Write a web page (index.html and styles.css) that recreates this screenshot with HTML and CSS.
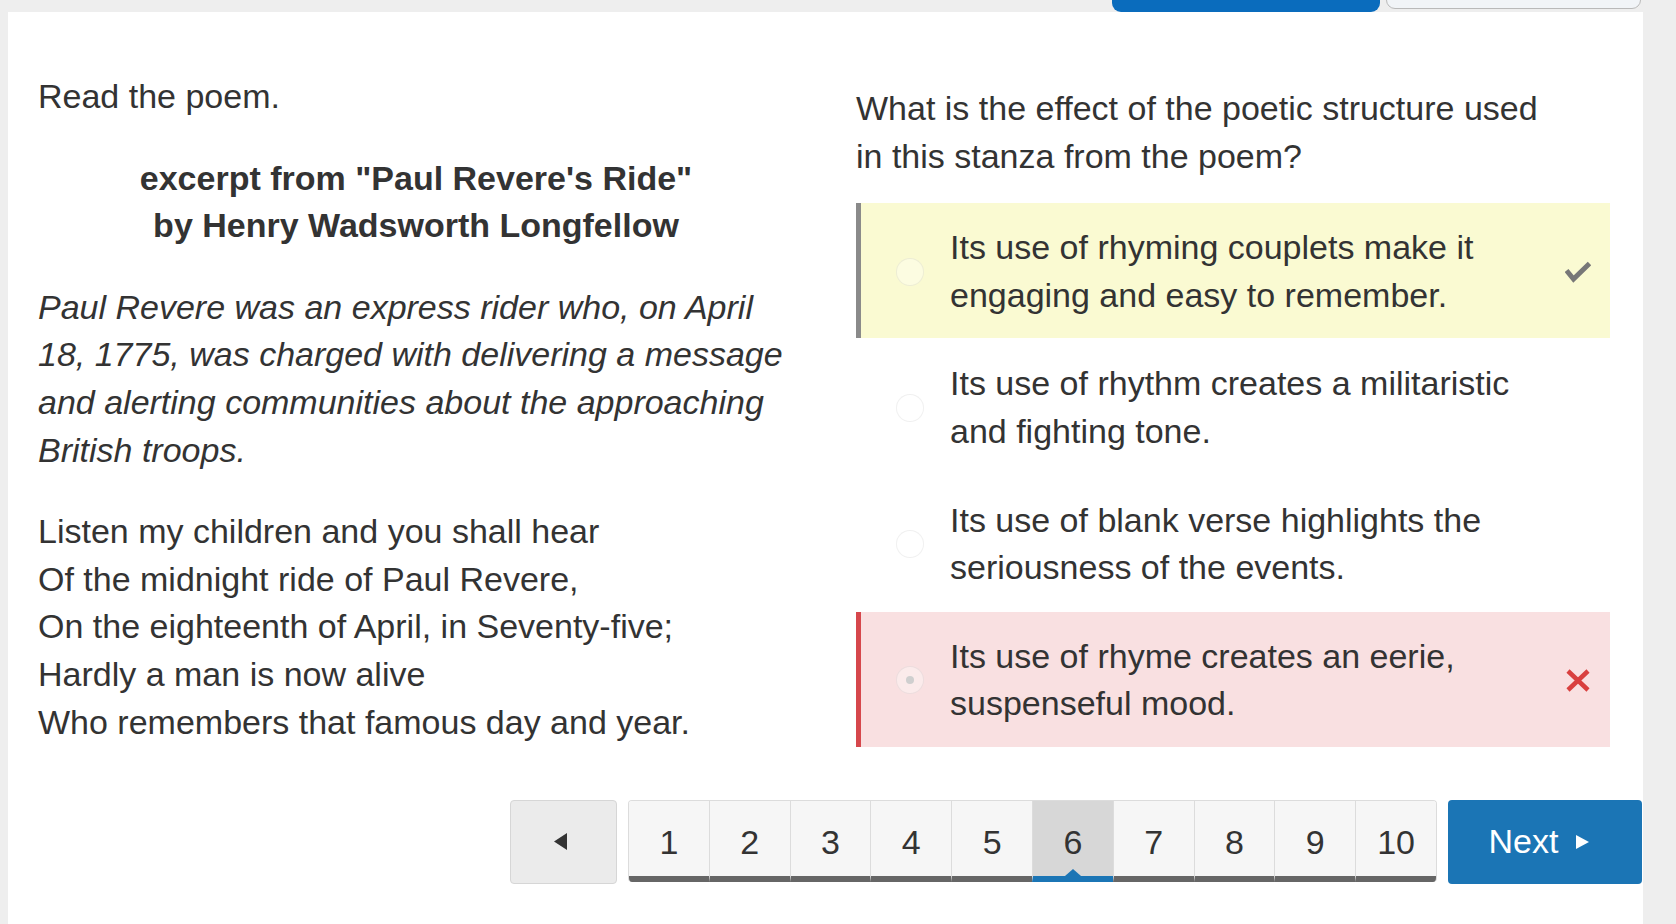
FILE: index.html
```html
<!DOCTYPE html>
<html lang="en">
<head>
<meta charset="utf-8">
<title>Paul Revere's Ride - Question 6</title>
<link rel="stylesheet" href="styles.css">
</head>
<body>
<div class="page">
  <div class="topbar">
    <span class="tb-btn tb-primary"></span>
    <span class="tb-btn tb-secondary"></span>
  </div>
  <main class="card">
    <div class="cols">
      <section class="passage">
        <p class="intro">Read the poem.</p>
        <p class="title">excerpt from "Paul Revere's Ride"<br>by Henry Wadsworth Longfellow</p>
        <p class="note">Paul Revere was an express rider who, on April 18, 1775, was charged with delivering a message and alerting communities about the approaching British troops.</p>
        <p class="poem">Listen my children and you shall hear<br>Of the midnight ride of Paul Revere,<br>On the eighteenth of April, in Seventy-five;<br>Hardly a man is now alive<br>Who remembers that famous day and year.</p>
      </section>
      <section class="question">
        <p class="prompt">What is the effect of the poetic structure used in this stanza from the poem?</p>
        <ul class="options">
          <li class="option is-correct">
            <span class="radio"></span>
            <span class="option-text">Its use of rhyming couplets make it engaging and easy to remember.</span>
            <span class="mark">
              <svg width="26" height="22" viewBox="0 0 26 22"><polyline points="1.5,9.5 8.5,18 24.5,2.5" fill="none" stroke="#777" stroke-width="5"/></svg>
            </span>
          </li>
          <li class="option">
            <span class="radio"></span>
            <span class="option-text">Its use of rhythm creates a militaristic and fighting tone.</span>
            <span class="mark"></span>
          </li>
          <li class="option">
            <span class="radio"></span>
            <span class="option-text">Its use of blank verse highlights the seriousness of the events.</span>
            <span class="mark"></span>
          </li>
          <li class="option is-wrong">
            <span class="radio picked"></span>
            <span class="option-text">Its use of rhyme creates an eerie, suspenseful mood.</span>
            <span class="mark">
              <svg width="26" height="23" viewBox="0 0 26 23"><path d="M3 2 L23 21 M23 2 L3 21" fill="none" stroke="#d9403f" stroke-width="4.5"/></svg>
            </span>
          </li>
        </ul>
      </section>
    </div>
    <nav class="pager">
      <button class="prev" type="button" aria-label="Previous">
        <svg width="13" height="17" viewBox="0 0 13 17"><polygon points="13,0 13,17 0,8.5" fill="#333"/></svg>
      </button>
      <div class="pages">
        <span class="page-num">1</span>
        <span class="page-num">2</span>
        <span class="page-num">3</span>
        <span class="page-num">4</span>
        <span class="page-num">5</span>
        <span class="page-num active">6</span>
        <span class="page-num">7</span>
        <span class="page-num">8</span>
        <span class="page-num">9</span>
        <span class="page-num">10</span>
      </div>
      <button class="next" type="button">Next
        <svg width="13" height="14" viewBox="0 0 13 14"><polygon points="0,0 13,7 0,14" fill="#fff"/></svg>
      </button>
    </nav>
  </main>
</div>
</body>
</html>
```

FILE: styles.css
```css
html, body {
  margin: 0;
  padding: 0;
}

body {
  background: #eeeeee;
  font-family: "Liberation Sans", Arial, Helvetica, sans-serif;
  font-size: 34px;
  line-height: 1.4;
  color: #333;
}

.page {
  padding-left: 8px;
  width: 1635px;
}

.topbar {
  height: 12px;
  display: flex;
  justify-content: flex-end;
  align-items: flex-end;
  gap: 6px;
  padding-right: 2px;
  overflow: hidden;
}

.tb-btn {
  display: block;
  height: 40px;
  box-sizing: border-box;
  border-radius: 0 0 9px 9px;
}

.tb-primary {
  width: 268px;
  background: #0a6cbd;
}

.tb-secondary {
  width: 255px;
  background: #f1f4f7;
  border: 1.5px solid #b9b9b9;
  margin-bottom: 3px;
}

.card {
  background: #fff;
  padding: 61px 1px 80px 30px;
}

.cols {
  display: grid;
  grid-template-columns: 756px 754px;
  column-gap: 62px;
  align-items: start;
}

p {
  margin: 0 0 34px;
}

.passage p:last-child {
  margin-bottom: 0;
}

.title {
  font-weight: bold;
  text-align: center;
}

.note {
  font-style: italic;
}

.question {
  padding-top: 12px;
}

.prompt {
  margin: 0 0 23px;
  padding-right: 50px;
}

.options {
  list-style: none;
  margin: 0;
  padding: 0;
}

.option {
  display: flex;
  align-items: center;
  padding: 21px 19px 19px 35px;
  border-left: 5px solid transparent;
  margin-bottom: 1px;
}

.option.is-correct {
  background: #fafad2;
  border-left-color: #8a8a8a;
}

.option.is-wrong {
  background: #f9e0e1;
  border-left-color: #d6474c;
}

.radio {
  flex: none;
  width: 28px;
  height: 28px;
  box-sizing: border-box;
  border-radius: 50%;
  border: 1.5px solid rgba(0, 0, 0, 0.06);
  background: rgba(255, 255, 255, 0.35);
  margin-right: 26px;
  display: flex;
  align-items: center;
  justify-content: center;
}

.radio.picked::after {
  content: "";
  width: 8px;
  height: 8px;
  border-radius: 50%;
  background: #cfcfcf;
}

.option-text {
  flex: 1;
}

.mark {
  flex: none;
  width: 26px;
  margin-left: 20px;
  display: flex;
  justify-content: center;
  align-items: center;
}

.pager {
  display: flex;
  justify-content: flex-end;
  align-items: flex-start;
  gap: 11px;
  margin-top: 52px;
}

.prev {
  width: 107px;
  height: 84px;
  box-sizing: border-box;
  background: #ebebeb;
  border: 1px solid #d6d6d6;
  border-radius: 4px;
  padding: 0 7px 0 0;
  display: flex;
  align-items: center;
  justify-content: center;
}

.pages {
  display: flex;
  width: 809px;
  height: 82px;
  box-sizing: border-box;
  border: 1px solid #dcdcdc;
  border-bottom: none;
  border-radius: 4px;
  overflow: hidden;
}

.page-num {
  flex: 1;
  position: relative;
  background: #f6f6f6;
  border-left: 1px solid #dcdcdc;
  border-bottom: 6px solid #666;
  padding-top: 7px;
  line-height: 68px;
  text-align: center;
  color: #333;
}

.page-num:first-child {
  border-left: none;
}

.page-num.active {
  background: #d7d7d7;
  border-bottom-color: #1b75b5;
}

.page-num.active::after {
  content: "";
  position: absolute;
  bottom: 0;
  left: 50%;
  margin-left: -8px;
  border-left: 8px solid transparent;
  border-right: 8px solid transparent;
  border-bottom: 7px solid #1b75b5;
}

.next {
  width: 194px;
  height: 84px;
  box-sizing: border-box;
  background: #1b75b5;
  color: #fff;
  border: none;
  border-radius: 4px;
  font: inherit;
  padding: 0 12px 0 0;
  display: flex;
  align-items: center;
  justify-content: center;
  gap: 18px;
}
```
